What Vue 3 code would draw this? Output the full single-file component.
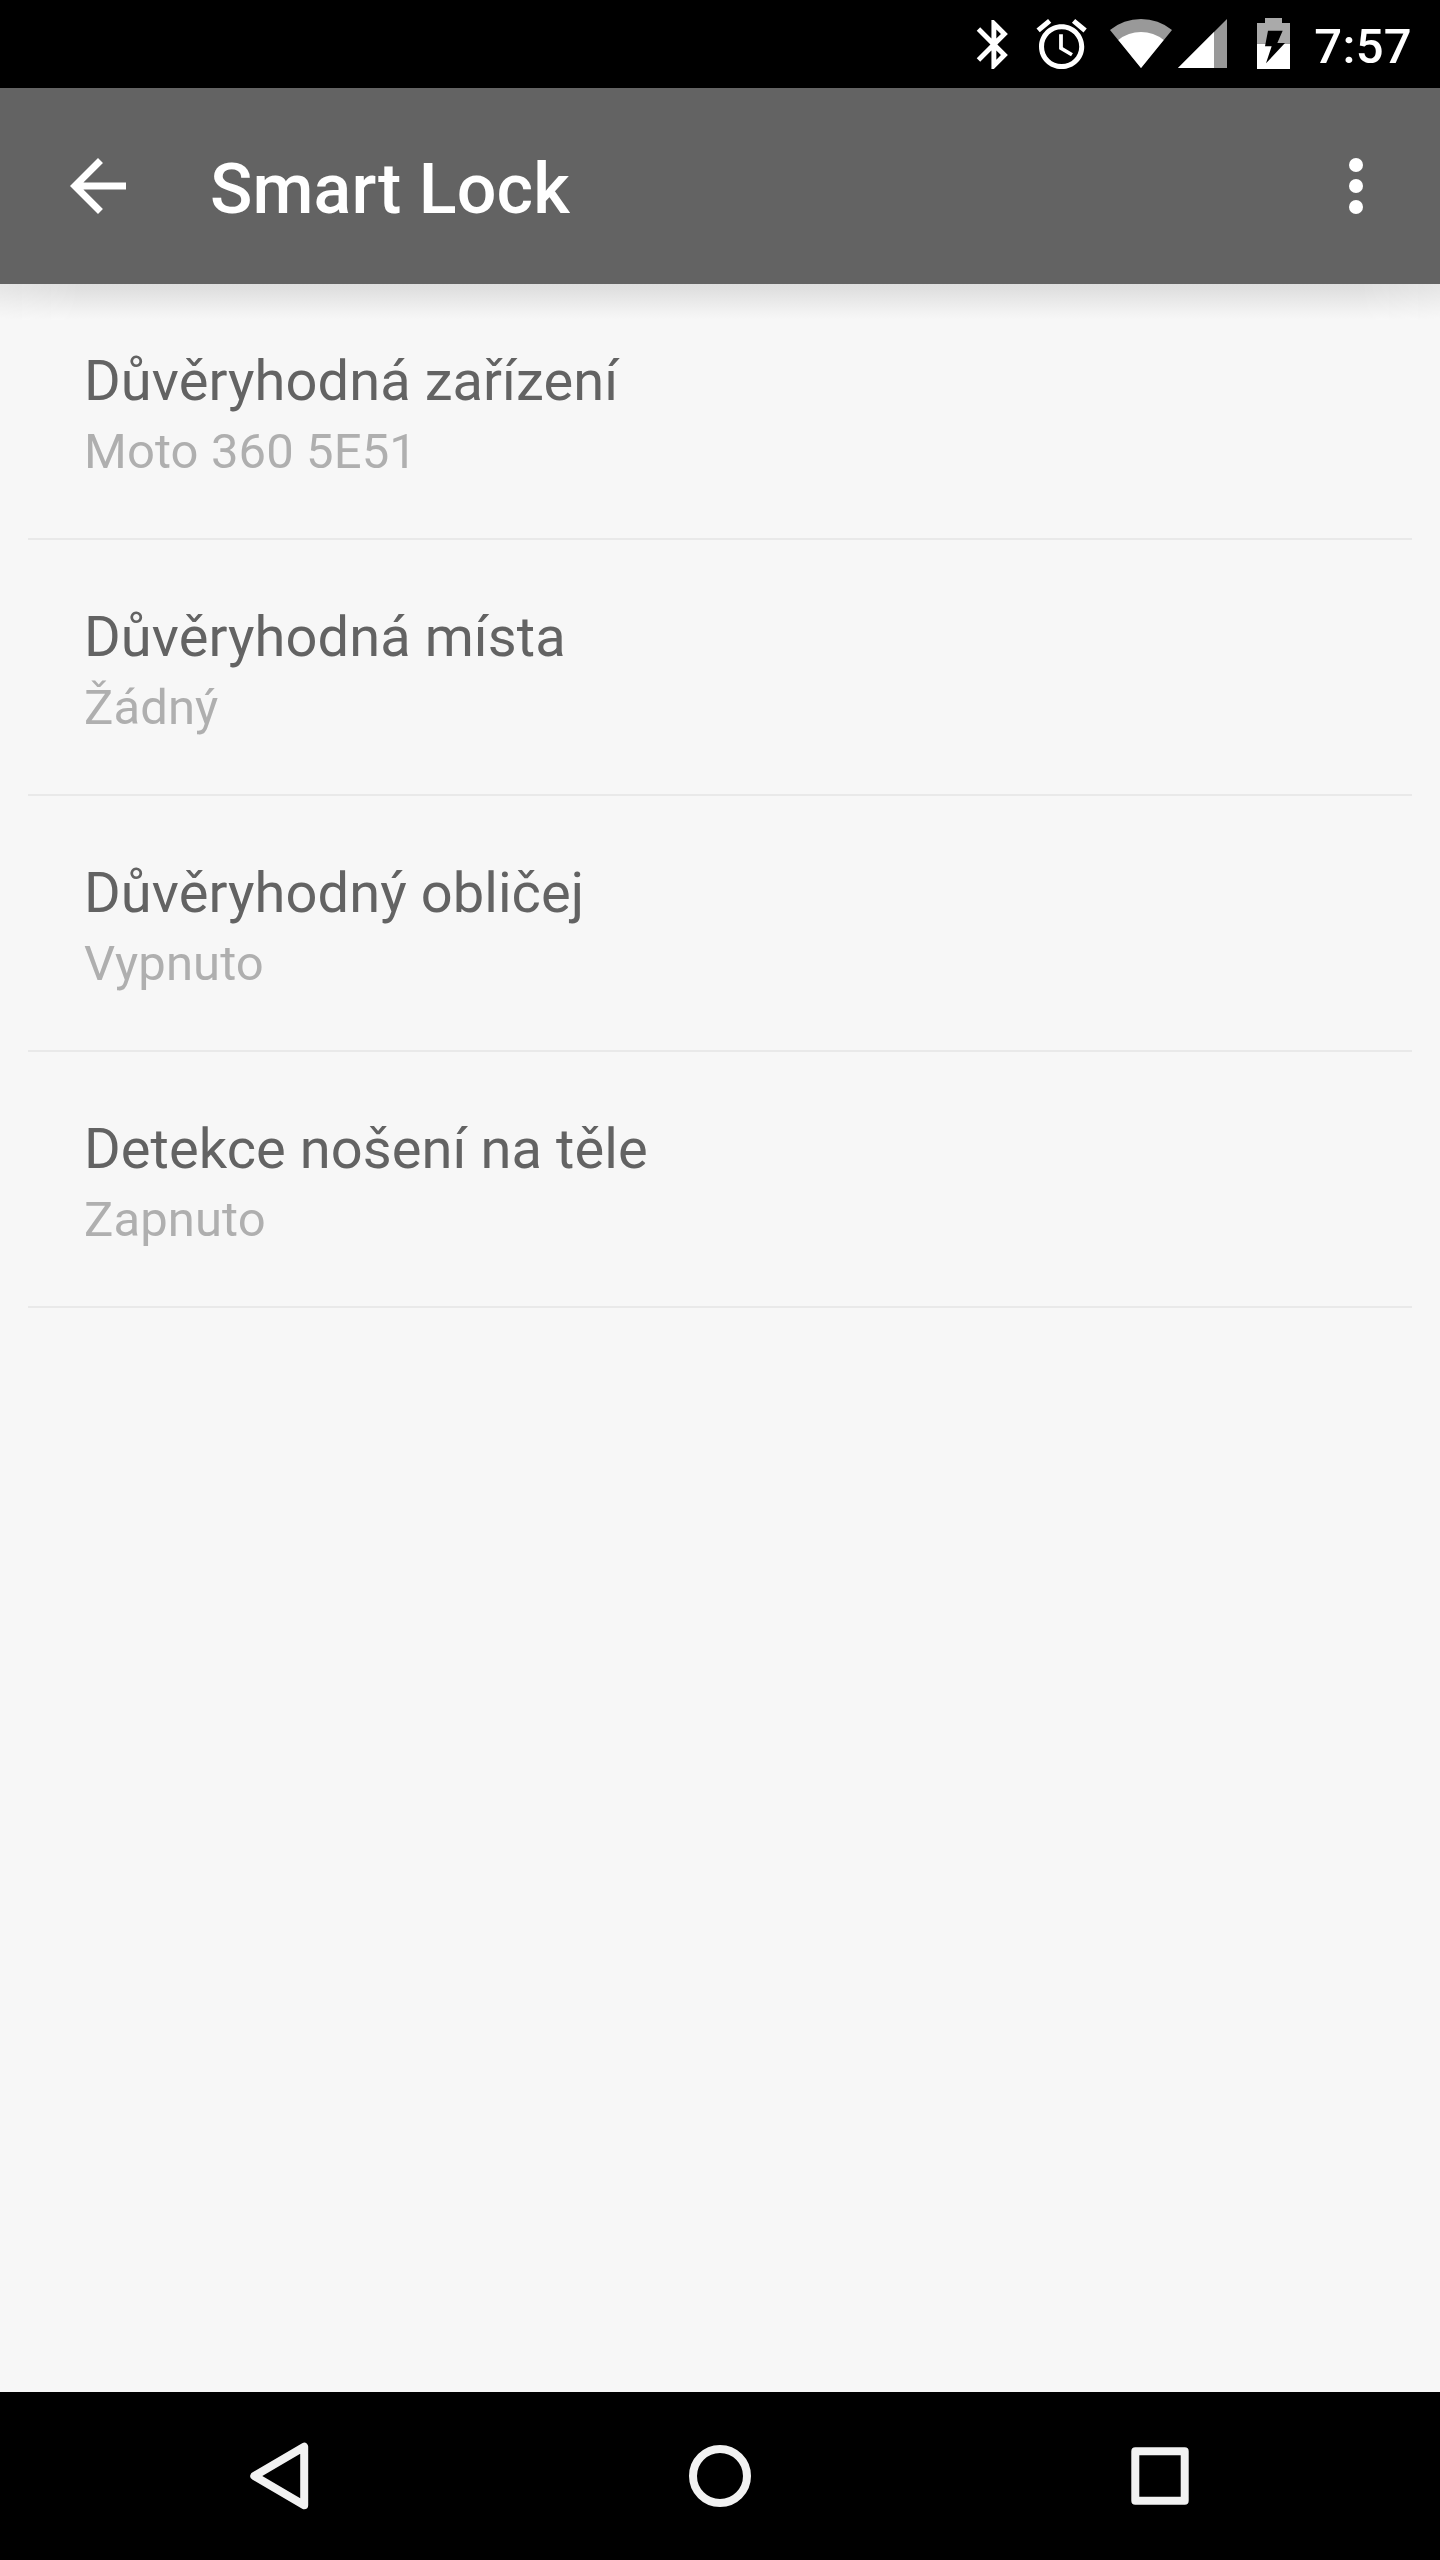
<script setup>
import { ref } from 'vue'

const title = ref('Smart Lock')
const time = ref('7:57')

const items = ref([
  { id: 'devices', label: 'Důvěryhodná zařízení', summary: 'Moto 360 5E51' },
  { id: 'places', label: 'Důvěryhodná místa', summary: 'Žádný' },
  { id: 'face', label: 'Důvěryhodný obličej', summary: 'Vypnuto' },
  { id: 'body', label: 'Detekce nošení na těle', summary: 'Zapnuto' }
])
</script>

<template>
  <div class="screen">
    <div class="status-bar">
      <svg class="bluetooth" viewBox="4.7 1.18 13.06 21.22" fill="currentColor">
        <path d="M17.71 7.71L12 2h-1v7.59L6.41 5 5 6.41 10.59 12 5 17.59 6.41 19 11 14.41V22h1l5.71-5.71-4.3-4.29 4.3-4.29zM13 5.83l1.88 1.88L13 9.59V5.83zm1.88 10.46L13 18.17v-3.76l1.88 1.88z" />
      </svg>
      <svg class="alarm" viewBox="1.8 1.45 20.7 20.95" preserveAspectRatio="none" fill="currentColor">
        <path d="M22 5.72l-4.6-3.86-1.29 1.53 4.6 3.86L22 5.72zM7.88 3.39L6.6 1.86 2 5.71l1.29 1.53 4.59-3.85zM12.5 8H11v6l4.75 2.85.75-1.23-4-2.37V8zM12 4c-4.97 0-9 4.03-9 9s4.02 9 9 9c4.97 0 9-4.03 9-9s-4.03-9-9-9zm0 16c-3.87 0-7-3.13-7-7s3.13-7 7-7 7 3.13 7 7-3.13 7-7 7z" />
      </svg>
      <svg class="wifi" viewBox="0 0 186 156">
        <path class="dim" d="M93 150L0 36A147 147 0 0 1 186 36Z" />
        <path fill="currentColor" d="M93 150L25 66A108 108 0 0 1 161 66Z" />
      </svg>
      <svg class="signal" viewBox="0 0 147 156">
        <path class="dim" d="M0 150L147 3V150Z" />
        <path fill="currentColor" d="M0 150L108 42V150Z" />
      </svg>
      <svg class="battery" viewBox="0 0 99 156">
        <path class="level" d="M24 0H75V15H99V77H0V15H24Z" />
        <path fill="currentColor" d="M0 77H99V153H0Z" />
        <path class="bolt" d="M33 38H77L61 75H84L27 136L44 85H24Z" />
      </svg>
      <span class="clock">{{ time }}</span>
    </div>

    <header class="app-bar">
      <button class="icon-button" aria-label="Zpět">
        <svg viewBox="0 0 24 24" fill="currentColor">
          <path d="M20 11H7.83l5.59-5.59L12 4l-8 8 8 8 1.41-1.41L7.83 13H20v-2z" />
        </svg>
      </button>
      <h1>{{ title }}</h1>
      <button class="icon-button" aria-label="Další možnosti">
        <svg viewBox="0 0 24 24" fill="currentColor">
          <circle cx="12" cy="6" r="2" />
          <circle cx="12" cy="12" r="2" />
          <circle cx="12" cy="18" r="2" />
        </svg>
      </button>
    </header>

    <main class="content">
      <ul class="list">
        <li v-for="item in items" :key="item.id" class="list-item">
          <span class="label">{{ item.label }}</span>
          <span class="summary">{{ item.summary }}</span>
        </li>
      </ul>
    </main>

    <nav class="nav-bar">
      <button class="nav-button" aria-label="Zpět">
        <svg viewBox="0 0 84 84">
          <path d="M16.3 42L66.2 12.8V71.2Z" stroke-linejoin="round" />
        </svg>
      </button>
      <button class="nav-button" aria-label="Domů">
        <svg viewBox="0 0 84 84">
          <circle cx="42" cy="42" r="27" />
        </svg>
      </button>
      <button class="nav-button" aria-label="Přehled">
        <svg viewBox="0 0 84 84">
          <rect x="17.3" y="17.3" width="49.4" height="49.4" stroke-linejoin="round" />
        </svg>
      </button>
    </nav>
  </div>
</template>

<style>
body {
  margin: 0;
  background: #f7f7f7;
}
</style>

<style scoped>
.screen {
  width: 1440px;
  height: 2560px;
  display: flex;
  flex-direction: column;
  background: #f7f7f7;
  font-family: Roboto, 'Liberation Sans', sans-serif;
  overflow: hidden;
}

.status-bar {
  box-sizing: border-box;
  height: 88px;
  flex: none;
  display: flex;
  align-items: center;
  justify-content: flex-end;
  padding-right: 28px;
  background: #000;
  color: #fff;
}

.status-bar svg {
  display: block;
  flex: none;
  height: 52px;
}

.status-bar .bluetooth {
  width: 32px;
  margin-right: 28px;
}

.status-bar .alarm {
  width: 52px;
  margin-right: 22px;
}

.status-bar .wifi {
  width: 62px;
  margin-right: 6px;
}

.status-bar .signal {
  width: 49px;
  margin-right: 30px;
}

.status-bar .battery {
  width: 33px;
}

.dim {
  fill: #999;
}

.level {
  fill: #aaa;
}

.bolt {
  fill: #000;
}

.clock {
  width: 122px;
  padding-top: 6px;
  font-size: 49px;
  font-weight: 500;
  line-height: 58px;
  letter-spacing: 0.3px;
  text-align: right;
}

.app-bar {
  position: relative;
  box-sizing: border-box;
  height: 196px;
  flex: none;
  display: flex;
  align-items: center;
  padding: 0 42px 0 56px;
  background: #636363;
  color: #fff;
}

.app-bar::after {
  content: '';
  position: absolute;
  top: 100%;
  left: 0;
  right: 0;
  height: 36px;
  background: linear-gradient(#dfdfdf, #e1e1e1 7px, #ebebeb 19px, #f3f3f3 29px, #f7f7f7);
  mask-image: linear-gradient(90deg, rgba(0, 0, 0, 0.7), #000 80px, #000 calc(100% - 80px), rgba(0, 0, 0, 0.7));
}

.app-bar h1 {
  flex: 1;
  margin: 0;
  padding: 6px 0 0 70px;
  font-size: 70px;
  font-weight: 500;
  line-height: 82px;
  letter-spacing: 0.1px;
}

button {
  display: flex;
  align-items: center;
  justify-content: center;
  padding: 0;
  border: none;
  background: none;
  color: inherit;
  cursor: pointer;
}

.icon-button svg,
.nav-button svg {
  display: block;
  width: 84px;
  height: 84px;
}

.content {
  flex: 1;
}

.list {
  margin: 0;
  padding: 0 28px;
  list-style: none;
}

.list-item {
  box-sizing: border-box;
  height: 256px;
  display: flex;
  flex-direction: column;
  gap: 9px;
  padding: 64px 56px 0;
  border-bottom: 2px solid #e9e9e9;
}

.label {
  font-size: 56px;
  line-height: 66px;
  letter-spacing: 0.08px;
  color: #636363;
}

.summary {
  font-size: 49px;
  line-height: 58px;
  letter-spacing: 0.1px;
  color: #afafaf;
}

.nav-bar {
  box-sizing: border-box;
  height: 168px;
  flex: none;
  display: flex;
  padding: 0 60px;
  background: #000;
}

.nav-button {
  flex: 1;
}

.nav-button svg {
  fill: none;
  stroke: #f2f2f2;
  stroke-width: 8;
}
</style>
